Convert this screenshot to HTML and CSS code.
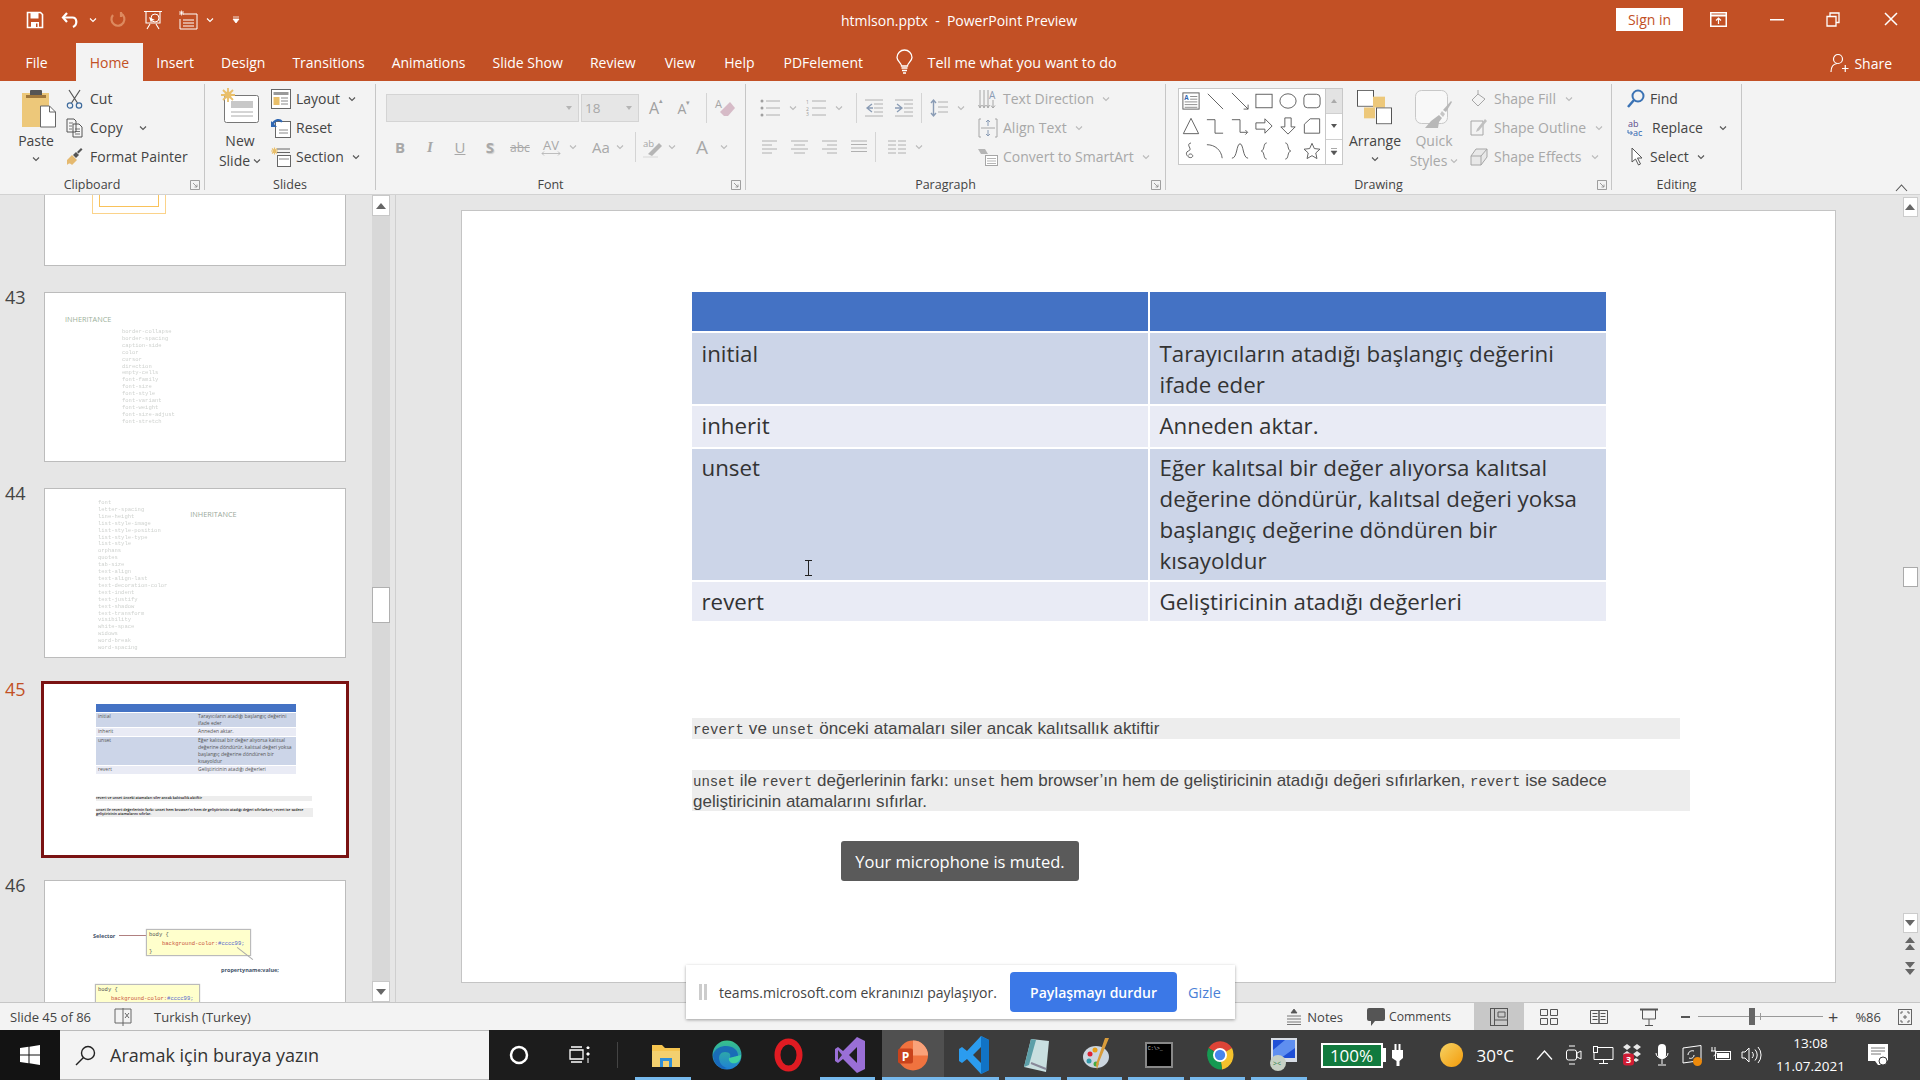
FILE: index.html
```html
<!DOCTYPE html>
<html lang="tr">
<head>
<meta charset="utf-8">
<title>htmlson.pptx - PowerPoint Preview</title>
<link rel="stylesheet" href="styles.css">
</head>
<body>
<svg class="defs" width="0" height="0">
  <symbol id="chev" viewBox="0 0 8 6"><path d="M1 1.5 4 4.5 7 1.5" fill="none" stroke="currentColor" stroke-width="1.1"/></symbol>
  <symbol id="launch" viewBox="0 0 10 10"><path d="M.5.5h9v9h-9zM3 3l4 4M7 4.5V7H4.5" fill="none" stroke="currentColor" stroke-width=".8"/></symbol>
</svg>
<div class="app">
  <header class="titlebar">
    <div class="qat">
      <svg class="q1" width="18" height="18" viewBox="0 0 18 18"><path d="M1.5 1.5h13l2 2v13h-15z" fill="none" stroke="#fff" stroke-width="1.6"/><path d="M4.5 1.5h8v6h-8zM5 11h8v5H5z" fill="#fff"/><path d="M10 12.5h1.5V16H10z" fill="#c25025"/></svg>
      <svg class="q2" width="20" height="18" viewBox="0 0 20 18"><path d="M6 2 2 6.5 6 11" fill="none" stroke="#fff" stroke-width="2.2"/><path d="M2.5 6.5h9c4.500 0 5.500 7 .5 9.500" fill="none" stroke="#fff" stroke-width="2.200"/></svg>
      <svg class="qc1" width="8" height="6"><use href="#chev"/></svg>
      <svg class="q3" width="16" height="18" viewBox="0 0 16 18"><path d="M3 4a6.500 6.500 0 1 0 8-1.500M11 1v5" fill="none" stroke="#dd8a5f" stroke-width="2.200"/></svg>
      <svg class="q4" width="20" height="20" viewBox="0 0 20 20"><path d="M1 1.500h18M3 2v11h14V2M4 19l3-5M16 19l-3-5" fill="none" stroke="#fff" stroke-width="1.100"/><circle cx="12" cy="8" r="4" fill="none" stroke="#fff"/><path d="M6 7l6 3-3 .5L8 13z" fill="#fff"/></svg>
      <svg class="q5" width="20" height="20" viewBox="0 0 20 20"><path d="M5 4h14v15H2V9M5 10h11M5 13h11M5 16h11" fill="none" stroke="#fff"/><path d="M1 3h5M3.500 .5v5M1.500 1l4 4M5.500 1l-4 4" stroke="#fff" stroke-width=".8"/></svg>
      <svg class="qc2" width="8" height="6"><use href="#chev"/></svg>
      <svg class="q6" width="8" height="8" viewBox="0 0 8 8"><path d="M1 1h6M1 3h6L4 7z" fill="#fff" stroke="#fff" stroke-width=".8"/></svg>
    </div>
    <div class="doc-title">htmlson.pptx&nbsp; - &nbsp;PowerPoint Preview</div>
    <div class="winctl">
      <button class="signin">Sign in</button>
      <svg class="w1" width="17" height="15" viewBox="0 0 17 15"><rect x=".75" y=".75" width="15.500" height="13.500" fill="none" stroke="#fff" stroke-width="1.500"/><path d="M.5 3.500h16" stroke="#fff" stroke-width="2"/><path d="M8.500 12V6M6 8.500l2.500-2.500L11 8.500" fill="none" stroke="#fff" stroke-width="1.200"/></svg>
      <svg class="w2" width="14" height="3"><rect width="14" height="1.500" y="1" fill="#fff"/></svg>
      <svg class="w3" width="14" height="15" viewBox="0 0 14 15"><path d="M1 4.500h9v9.500H1zM4 4V1h9v9.500h-3" fill="none" stroke="#fff" stroke-width="1.300"/></svg>
      <svg class="w4" width="14" height="14" viewBox="0 0 14 14"><path d="M1 1l12 12M13 1 1 13" stroke="#fff" stroke-width="1.500"/></svg>
    </div>
  </header>
  <nav class="tabs">
    <span class="tab t-file">File</span>
    <span class="tab active">Home</span>
    <span class="tab">Insert</span>
    <span class="tab">Design</span>
    <span class="tab">Transitions</span>
    <span class="tab">Animations</span>
    <span class="tab">Slide Show</span>
    <span class="tab">Review</span>
    <span class="tab t-late">View</span>
    <span class="tab t-late">Help</span>
    <span class="tab t-late">PDFelement</span>
    <svg class="bulb" width="17" height="24" viewBox="0 0 17 24"><path d="M5.500 16c0-3-4.500-5-4.500-8.500a7.500 7.500 0 0 1 15 0c0 3.500-4.500 5.500-4.500 8.500z" fill="none" stroke="#fff" stroke-width="1.300"/><path d="M5.500 18h6M6 20.500h5M7 23h3" stroke="#fff" stroke-width="1.500"/></svg>
    <span class="tellme">Tell me what you want to do</span>
    <span class="share">
      <svg width="19" height="20" viewBox="0 0 19 20"><circle cx="8" cy="6" r="4.500" fill="none" stroke="#fff" stroke-width="1.200"/><path d="M1 19c0-5 2.500-8 6-8.500M12 15.500h6.500M15.250 12v7" fill="none" stroke="#fff" stroke-width="1.200"/></svg>
      Share
    </span>
  </nav>
  <section class="ribbon">
    <div class="group g-clip">
      <div class="gbody">
        <div class="big b-paste">
          <svg class="paste-ico" width="35" height="38" viewBox="0 0 35 38"><rect x="0" y="3" width="27" height="34" fill="#edc87a"/><rect x="8" y="0" width="12" height="6" rx="1" fill="#555"/><rect x="4" y="5" width="20" height="3" fill="#a0783c"/><path d="M18.500 16h9l6 6v15h-15z" fill="#fff" stroke="#666"/><path d="M27.500 16v6h6" fill="none" stroke="#666"/></svg>
          <span class="big-label">Paste</span>
          <svg class="chv" width="8" height="6"><use href="#chev"/></svg>
        </div>
        <div class="stack">
          <div class="rbtn"><svg width="17" height="20" viewBox="0 0 17 20"><path d="M3 1l8.500 13M14 1 5.500 14" stroke="#555" stroke-width="1.200" fill="none"/><circle cx="4" cy="16.500" r="2.700" fill="none" stroke="#3d6a9c" stroke-width="1.200"/><circle cx="13" cy="16.500" r="2.700" fill="none" stroke="#3d6a9c" stroke-width="1.200"/></svg><span>Cut</span></div>
          <div class="rbtn"><svg width="17" height="20" viewBox="0 0 17 20"><path d="M1 1h7l2 2v11H1zM7 6h6l3 3v10H7z" fill="#f7f7f7" stroke="#555"/><path d="M3 5h4M3 8h3M3 11h3M9 11h5M9 13.500h5M9 16h5" stroke="#555" stroke-width=".8"/></svg><span>Copy</span><svg class="chv c-copy" width="8" height="6"><use href="#chev"/></svg></div>
          <div class="rbtn"><svg width="17" height="20" viewBox="0 0 17 20"><path d="M1 13l5-5 5 5-5 5c-2-2-3-2-5 0z" fill="#e5b96f"/><path d="M7 8l3-3 3 3-3 3z" fill="#555"/><path d="M11 5l4-4 1.500 1.500-4 4z" fill="#555"/></svg><span>Format Painter</span></div>
        </div>
      </div>
      <div class="glabel">Clipboard<svg class="launch" width="10" height="10"><use href="#launch"/></svg></div>
    </div>
    <div class="group g-slides">
      <div class="gbody">
        <div class="big b-new">
          <svg width="38" height="35" viewBox="0 0 38 35"><rect x="3.500" y="7.500" width="34" height="27" rx="2" fill="#fff" stroke="#777"/><rect x="10" y="13" width="22" height="7" fill="#c8c8c8"/><path d="M10 24h22M10 28h22" stroke="#aaa"/><path d="M7 0v14M0 7h14M2 2l10 10M12 2 2 12" stroke="#e9bf6a" stroke-width="1.800"/><circle cx="7" cy="7" r="3.500" fill="#e9bf6a"/></svg>
          <span class="big-label l-new">New</span>
          <span class="big-label">Slide <svg class="chv" width="8" height="6"><use href="#chev"/></svg></span>
        </div>
        <div class="stack">
          <div class="rbtn"><svg width="20" height="20" viewBox="0 0 20 20"><rect x=".5" y=".5" width="19" height="19" fill="#fff" stroke="#666"/><rect x="2.500" y="3" width="15" height="3" fill="#999"/><rect x="2.500" y="8" width="6" height="8" fill="#e9bf6a"/><path d="M10 9h7M10 12h7M10 15h7" stroke="#888"/></svg><span>Layout</span><svg class="chv" width="8" height="6"><use href="#chev"/></svg></div>
          <div class="rbtn"><svg width="20" height="20" viewBox="0 0 20 20"><rect x="4.500" y="3.500" width="15" height="16" fill="#fff" stroke="#666"/><path d="M8 12h9M8 15h9" stroke="#888"/><path d="M1 7c3-6 8-6 10-3" fill="none" stroke="#2f67b2" stroke-width="2.200"/><path d="M0 3v6h6z" fill="#2f67b2"/></svg><span>Reset</span></div>
          <div class="rbtn"><svg width="20" height="20" viewBox="0 0 20 20"><rect x="6.500" y="8.500" width="13" height="11" fill="#fff" stroke="#666"/><path d="M6 2h13M6 5.500h13" stroke="#666"/><path d="M8 12h10" stroke="#888"/><path d="M0 4h7M3.500 .5v7M1 1.500l5 5M6 1.500l-5 5" stroke="#e9bf6a" stroke-width="1.100"/></svg><span>Section</span><svg class="chv" width="8" height="6"><use href="#chev"/></svg></div>
        </div>
      </div>
      <div class="glabel">Slides</div>
    </div>
    <div class="group g-font dis">
      <div class="gbody col">
        <div class="frow r1">
          <div class="combo c-name"><svg width="6" height="4" viewBox="0 0 6 4"><path d="M0 0h6L3 4z" fill="#b5b5b5"/></svg></div>
          <div class="combo c-size"><span>18</span><svg width="6" height="4" viewBox="0 0 6 4"><path d="M0 0h6L3 4z" fill="#b5b5b5"/></svg></div>
          <span class="glyph w30">A<sup>▴</sup></span>
          <span class="glyph w30 sm">A<sup>▾</sup></span>
          <i class="vsep"></i>
          <svg class="clear" width="20" height="22" viewBox="0 0 20 22"><path d="M9 11 15 5l5 6-7 8H9L5 15z" fill="#c9a3b3" opacity=".7"/><text x="0" y="11" font-size="11" fill="#a6a6a6" font-family="Open Sans">A</text></svg>
        </div>
        <div class="frow r2">
          <b class="fmt">B</b><i class="fmt it">I</i><u class="fmt">U</u><b class="fmt shadow">S</b><s class="fmt sm2">abc</s>
          <span class="fmt av">AV<svg width="20" height="5" viewBox="0 0 20 5"><path d="M1 2.500h18M3 .5 1 2.500l2 2M17 .5l2 2-2 2" fill="none" stroke="#b0b0b0" stroke-width=".8"/></svg></span>
          <svg class="chv c1" width="8" height="6"><use href="#chev"/></svg>
          <span class="fmt aa">Aa</span>
          <svg class="chv c2" width="8" height="6"><use href="#chev"/></svg>
          <i class="vsep v2"></i>
          <svg class="hl" width="21" height="21" viewBox="0 0 21 21"><text x="0" y="10" font-size="9.500" fill="#a6a6a6" font-family="Open Sans">ab</text><path d="M5 17 16 6l3 3-10 10z" fill="#b5b5b5"/><path d="M0 20h15" stroke="#e5e5e5" stroke-width="2"/></svg>
          <svg class="chv c3" width="8" height="6"><use href="#chev"/></svg>
          <span class="fmt bigA">A</span>
          <svg class="chv c4" width="8" height="6"><use href="#chev"/></svg>
        </div>
      </div>
      <div class="glabel">Font<svg class="launch" width="10" height="10"><use href="#launch"/></svg></div>
    </div>
    <div class="group g-para dis">
      <div class="gbody">
        <div class="pleft">
          <div class="prow p1">
            <svg width="20" height="18" viewBox="0 0 20 18"><path d="M6 2h14M6 9h14M6 16h14" stroke="#b0b0b0"/><circle cx="2" cy="2" r="1.500" fill="#a0a0a0"/><circle cx="2" cy="9" r="1.500" fill="#a0a0a0"/><circle cx="2" cy="16" r="1.500" fill="#a0a0a0"/></svg>
            <svg class="chv pc" width="8" height="6"><use href="#chev"/></svg>
            <svg class="pn" width="20" height="18" viewBox="0 0 20 18"><path d="M6 2h14M6 9h14M6 16h14" stroke="#b0b0b0"/><text x="0" y="5" font-size="5" fill="#999">1</text><text x="0" y="11.500" font-size="5" fill="#999">2</text><text x="0" y="17" font-size="5" fill="#999">3</text></svg>
            <svg class="chv pc" width="8" height="6"><use href="#chev"/></svg>
            <i class="vsep v-out"></i>
            <svg width="18" height="18" viewBox="0 0 18 18"><path d="M0 1h18M9 5h9M9 9h9M9 13h9M0 17h18" stroke="#b0b0b0"/><path d="M7 5 2 9l5 4M2 9h6" fill="none" stroke="#8a9cb5" stroke-width="1.300"/></svg>
            <svg class="pi" width="18" height="18" viewBox="0 0 18 18"><path d="M0 1h18M9 5h9M9 9h9M9 13h9M0 17h18" stroke="#b0b0b0"/><path d="M2 5l5 4-5 4M7 9H0" fill="none" stroke="#8a9cb5" stroke-width="1.300"/></svg>
            <i class="vsep"></i>
            <svg width="18" height="20" viewBox="0 0 18 20"><path d="M8 4h10M8 9h10M8 14h10" stroke="#b0b0b0"/><path d="M3.500 2v16M1 5l2.500-3L6 5M1 15l2.500 3L6 15" fill="none" stroke="#8a9cb5" stroke-width="1.400"/></svg>
            <svg class="chv pc" width="8" height="6"><use href="#chev"/></svg>
          </div>
          <div class="prow p2">
            <svg width="15" height="14" viewBox="0 0 15 14"><path d="M0 1h15M0 5h10M0 9h15M0 13h10" stroke="#b0b0b0"/></svg>
            <svg class="ag" width="17" height="14" viewBox="0 0 17 14"><path d="M0 1h17M3 5h11M0 9h17M3 13h11" stroke="#b0b0b0"/></svg>
            <svg class="ag" width="15" height="14" viewBox="0 0 15 14"><path d="M0 1h15M5 5h10M0 9h15M5 13h10" stroke="#b0b0b0"/></svg>
            <svg class="ag" width="16" height="14" viewBox="0 0 16 14"><path d="M0 1h16M0 4.500h16M0 8h16M0 11.500h16" stroke="#b0b0b0"/></svg>
            <i class="vsep"></i>
            <svg width="18" height="14" viewBox="0 0 18 14"><path d="M0 1h8M10 1h8M0 5h8M10 5h8M0 9h8M10 9h8M0 13h8M10 13h8" stroke="#b0b0b0"/></svg>
            <svg class="chv pc" width="8" height="6"><use href="#chev"/></svg>
          </div>
        </div>
        <div class="stack s-para">
          <div class="rbtn"><svg width="20" height="20" viewBox="0 0 20 20"><path d="M2 1v17M6 1v17M10 1v17" stroke="#a6a6a6"/><path d="M.5 16 2 19l1.500-3M4.500 16 6 19l1.500-3M8.500 16l1.500 3 1.500-3" fill="none" stroke="#a6a6a6"/><text x="11" y="10" font-size="10" fill="#8a9cb5" font-family="Open Sans">A</text><path d="M15 11v8M13 16.500l2 2.500 2-2.500" fill="none" stroke="#a6a6a6"/></svg><span>Text Direction</span><svg class="chv" width="8" height="6"><use href="#chev"/></svg></div>
          <div class="rbtn"><svg width="20" height="20" viewBox="0 0 20 20"><path d="M3 1H1v18h2M17 1h2v18h-2" fill="none" stroke="#a6a6a6"/><path d="M3 10h14" stroke="#a6a6a6"/><path d="M10 2v6M8 4l2-2 2 2M10 12v6M8 16l2 2 2-2" fill="none" stroke="#8a9cb5"/></svg><span>Align Text</span><svg class="chv" width="8" height="6"><use href="#chev"/></svg></div>
          <div class="rbtn"><svg width="20" height="20" viewBox="0 0 20 20"><path d="M0 2h7l3 5H3z" fill="#b5b5b5"/><rect x="7.500" y="8.500" width="12" height="10" fill="#fff" stroke="#a6a6a6"/><path d="M9 11.500h9M9 14h9M9 16.500h9" stroke="#b5b5b5"/></svg><span>Convert to SmartArt</span><svg class="chv" width="8" height="6"><use href="#chev"/></svg></div>
        </div>
      </div>
      <div class="glabel">Paragraph<svg class="launch" width="10" height="10"><use href="#launch"/></svg></div>
    </div>
    <div class="group g-draw">
      <div class="gbody">
        <div class="gallery">
          <div class="shapes">
            <svg viewBox="0 0 20 20"><rect x="1" y="1" width="18" height="18" fill="#fff" stroke="#555"/><path d="M9 5h8M9 8h8M3 11h14M3 14h14M3 17h14" stroke="#666" stroke-width=".8"/><text x="2.500" y="9" font-size="7" font-weight="700" fill="#2f67b2" font-family="Open Sans">A</text></svg>
            <svg viewBox="0 0 20 20"><path d="M2 2l17 17" stroke="#555"/></svg>
            <svg viewBox="0 0 20 20"><path d="M1 1l18 18M19 14v5h-5" stroke="#555" fill="none"/></svg>
            <svg viewBox="0 0 20 20"><rect x="1" y="2.500" width="18" height="15" fill="none" stroke="#555"/></svg>
            <svg viewBox="0 0 20 20"><ellipse cx="10" cy="10" rx="9" ry="8" fill="none" stroke="#555"/></svg>
            <svg viewBox="0 0 20 20"><rect x="1" y="2.500" width="18" height="15" rx="4" fill="none" stroke="#555"/></svg>
            <svg viewBox="0 0 20 20"><path d="M10 1.500l8.500 17h-17z" fill="none" stroke="#555"/></svg>
            <svg viewBox="0 0 20 20"><path d="M1 3h9v15h9" fill="none" stroke="#555"/></svg>
            <svg viewBox="0 0 20 20"><path d="M1 3h9v14h8M16 14.500l2.500 2.500-2.500 2.500" fill="none" stroke="#555"/></svg>
            <svg viewBox="0 0 20 20"><path d="M1 6.500h10V2l8 8-8 8v-4.500H1z" fill="none" stroke="#555"/></svg>
            <svg viewBox="0 0 20 20"><path d="M6.500 1v10H2l8 8 8-8h-4.500V1z" fill="none" stroke="#555"/></svg>
            <svg viewBox="0 0 20 20"><path d="M1.500 18V8L8 2h10.500v16z" fill="none" stroke="#555"/></svg>
            <svg viewBox="0 0 20 20"><path d="M10 1C3 3 13 8 7 10c-5 2 0 9 4 7 3-2-2-6-4-2" fill="none" stroke="#555"/></svg>
            <svg viewBox="0 0 20 20"><path d="M1 3c9 0 16 6 17 15" fill="none" stroke="#555"/></svg>
            <svg viewBox="0 0 20 20"><path d="M1 18C7 18 6 2 10 2s3 16 9 16" fill="none" stroke="#555"/></svg>
            <svg viewBox="0 0 20 20"><path d="M13 1c-4 0-2 8-6 9 4 1 2 9 6 9" fill="none" stroke="#555"/></svg>
            <svg viewBox="0 0 20 20"><path d="M7 1c4 0 2 8 6 9-4 1-2 9-6 9" fill="none" stroke="#555"/></svg>
            <svg viewBox="0 0 20 20"><path d="M10 1.500l2.600 5.800 6.200.7-4.600 4.200 1.300 6.200-5.500-3.200-5.500 3.200 1.300-6.200L1.200 8l6.200-.7z" fill="none" stroke="#555"/></svg>
          </div>
          <div class="gscroll">
            <span class="gs-top"><svg width="6" height="4" viewBox="0 0 6 4"><path d="M0 4h6L3 0z" fill="#aaa"/></svg></span>
            <span class="gs-mid"><svg width="6" height="4" viewBox="0 0 6 4"><path d="M0 0h6L3 4z" fill="#555"/></svg></span>
            <span class="gs-bot"><svg width="6" height="7" viewBox="0 0 6 7"><path d="M0 .5h6M0 3h6L3 7z" fill="#555" stroke="#555" stroke-width=".5"/></svg></span>
          </div>
        </div>
        <div class="big b-arr">
          <svg width="36" height="35" viewBox="0 0 36 42" preserveAspectRatio="none"><rect x="0.500" y="0.500" width="16" height="19" fill="#fff" stroke="#555"/><rect x="16" y="8" width="12" height="13" fill="#edc87a"/><rect x="7" y="21" width="11" height="13" fill="#edc87a"/><rect x="19.500" y="21.500" width="15" height="19" fill="#fff" stroke="#555"/></svg>
          <span class="big-label">Arrange</span>
          <svg class="chv" width="8" height="6"><use href="#chev"/></svg>
        </div>
        <div class="big b-qs dis">
          <svg width="38" height="38" viewBox="0 0 38 38"><rect x=".5" y=".5" width="32" height="33" rx="6" fill="#f8f8f8" stroke="#c8c8c8"/><path d="M37 12 31 22l-3-2 8-9z" fill="#b8b8b8"/><path d="M27 21l3 3-2 3-3-3z" fill="#c6c6c6"/><path d="M24 25l3 3-3 4-1 6H10l6-7z" fill="#b8b8b8"/></svg>
          <span class="big-label">Quick</span>
          <span class="big-label">Styles <svg class="chv" width="8" height="6"><use href="#chev"/></svg></span>
        </div>
        <div class="stack s-shape dis">
          <div class="rbtn"><svg width="18" height="20" viewBox="0 0 18 20"><path d="M8 5 2 11l6 6 7-7zM8 5V1" fill="none" stroke="#a6a6a6"/></svg><span>Shape Fill</span><svg class="chv" width="8" height="6"><use href="#chev"/></svg></div>
          <div class="rbtn"><svg width="18" height="20" viewBox="0 0 18 20"><path d="M1 3h12v14H1z" fill="none" stroke="#a6a6a6"/><path d="M15 1 7 11l-1 3 3-1.500L17 3z" fill="#c0c0c0"/></svg><span>Shape Outline</span><svg class="chv" width="8" height="6"><use href="#chev"/></svg></div>
          <div class="rbtn"><svg width="18" height="20" viewBox="0 0 18 20"><path d="M6 2h11v8l-6 8H1V9z" fill="#e8e8e8" stroke="#a6a6a6"/><path d="M1 9h10v9M11 9l6-7" fill="none" stroke="#a6a6a6"/></svg><span>Shape Effects</span><svg class="chv" width="8" height="6"><use href="#chev"/></svg></div>
        </div>
      </div>
      <div class="glabel">Drawing<svg class="launch" width="10" height="10"><use href="#launch"/></svg></div>
    </div>
    <div class="group g-edit">
      <div class="gbody">
        <div class="stack">
          <div class="rbtn"><svg width="18" height="20" viewBox="0 0 18 20"><circle cx="11" cy="7" r="5.500" fill="none" stroke="#3a72b4" stroke-width="2"/><path d="M7 11 1 18" stroke="#3a72b4" stroke-width="2.500"/></svg><span>Find</span></div>
          <div class="rbtn"><svg width="20" height="20" viewBox="0 0 20 20"><text x="1" y="9" font-size="9" fill="#5a4a8a" font-family="Open Sans">ab</text><text x="6" y="18" font-size="9" fill="#2f67b2" font-family="Open Sans">ac</text><path d="M1 12v3h4M3.500 13 5.500 15l-2 2" fill="none" stroke="#2f67b2" stroke-width=".9"/></svg><span>Replace</span><svg class="chv c-rep" width="8" height="6"><use href="#chev"/></svg></div>
          <div class="rbtn"><svg width="18" height="20" viewBox="0 0 18 20"><path d="M5 1v14l3.500-3 3 6 2-1-3-6H15z" fill="#fff" stroke="#555"/></svg><span>Select</span><svg class="chv" width="8" height="6"><use href="#chev"/></svg></div>
        </div>
      </div>
      <div class="glabel">Editing</div>
    </div>
    <svg class="collapse" width="13" height="8" viewBox="0 0 13 8"><path d="M1 7l5.500-6L12 7" fill="none" stroke="#555" stroke-width="1.100"/></svg>
  </section>

  <main class="workspace">
    <aside class="thumbs">
      <div class="thumb-list">
        <div class="trow t-cut"><span class="tnum"></span>
          <div class="card c-partial"><div class="orange"><div class="orange-in"></div></div></div>
        </div>
        <div class="trow"><span class="tnum">43</span>
          <div class="card c43">
            <div class="inh">INHERITANCE</div>
            <div class="mini-code l43">border-collapse<br>border-spacing<br>caption-side<br>color<br>cursor<br>direction<br>empty-cells<br>font-family<br>font-size<br>font-style<br>font-variant<br>font-weight<br>font-size-adjust<br>font-stretch</div>
          </div>
        </div>
        <div class="trow"><span class="tnum">44</span>
          <div class="card c44">
            <div class="mini-code">font<br>letter-spacing<br>line-height<br>list-style-image<br>list-style-position<br>list-style-type<br>list-style<br>orphans<br>quotes<br>tab-size<br>text-align<br>text-align-last<br>text-decoration-color<br>text-indent<br>text-justify<br>text-shadow<br>text-transform<br>visibility<br>white-space<br>widows<br>word-break<br>word-spacing</div>
            <div class="inh i44">INHERITANCE</div>
          </div>
        </div>
        <div class="trow sel"><span class="tnum">45</span>
          <div class="card c45">
            <div class="mt">
              <div class="mt-h"></div><div class="mt-h"></div>
              <div class="mt-a h15">initial</div><div class="mt-a h15">Tarayıcıların atadığı başlangıç değerini<br>ifade eder</div>
              <div class="mt-b">inherit</div><div class="mt-b">Anneden aktar.</div>
              <div class="mt-a h29">unset</div><div class="mt-a h29">Eğer kalıtsal bir değer alıyorsa kalıtsal<br>değerine döndürür, kalıtsal değeri yoksa<br>başlangıç değerine döndüren bir<br>kısayoldur</div>
              <div class="mt-b">revert</div><div class="mt-b">Geliştiricinin atadığı değerleri</div>
            </div>
            <div class="mn mn1">revert ve unset önceki atamaları siler ancak kalıtsallık aktiftir</div>
            <div class="mn mn2">unset ile revert değerlerinin farkı: unset hem browser’ın hem de geliştiricinin atadığı değeri sıfırlarken, revert ise sadece geliştiricinin atamalarını sıfırlar.</div>
          </div>
        </div>
        <div class="trow"><span class="tnum">46</span>
          <div class="card c46">
            <span class="d-sel">Selector</span>
            <i class="d-line"></i>
            <div class="d-box d1">body {<br><span class="d-ind"><em>background-color:</em><b>#cccc99;</b></span><br>}</div>
            <i class="d-arrow"></i>
            <span class="d-prop">propertyname:value;</span>
            <div class="d-box d2">body {<br><span class="d-ind"><em>background-color:</em><b>#cccc99;</b></span></div>
          </div>
        </div>
      </div>
      <div class="vscroll">
        <span class="sb-btn"><svg width="10" height="6" viewBox="0 0 10 6"><path d="M0 6h10L5 0z" fill="#666"/></svg></span>
        <span class="sb-thumb"></span>
        <span class="sb-btn sb-end"><svg width="10" height="6" viewBox="0 0 10 6"><path d="M0 0h10L5 6z" fill="#666"/></svg></span>
      </div>
    </aside>
    <div class="stage">
      <div class="slide">
        <div class="table">
          <div class="th"></div><div class="th"></div>
          <div class="td a r-init">initial</div><div class="td a r-init">Tarayıcıların atadığı başlangıç değerini ifade eder</div>
          <div class="td b r-inh">inherit</div><div class="td b r-inh">Anneden aktar.</div>
          <div class="td a r-un">unset</div><div class="td a r-un">Eğer kalıtsal bir değer alıyorsa kalıtsal değerine döndürür, kalıtsal değeri yoksa başlangıç değerine döndüren bir kısayoldur</div>
          <div class="td b r-rev">revert</div><div class="td b r-rev">Geliştiricinin atadığı değerleri</div>
        </div>
        <p class="note n1"><code>revert</code> <span>ve</span> <code>unset</code> <span>önceki atamaları siler ancak kalıtsallık aktiftir</span></p>
        <p class="note n2"><code>unset</code> <span>ile</span> <code>revert</code> <span>değerlerinin farkı:</span> <code>unset</code> <span>hem browser’ın hem de geliştiricinin atadığı değeri sıfırlarken,</span> <code>revert</code> <span>ise sadece geliştiricinin atamalarını sıfırlar.</span></p>
      </div>
      <div class="rscroll">
        <span class="rs-btn"><svg width="10" height="6" viewBox="0 0 10 6"><path d="M0 6h10L5 0z" fill="#666"/></svg></span>
        <span class="rs-thumb"></span>
        <span class="rs-btn rs-end"><svg width="10" height="6" viewBox="0 0 10 6"><path d="M0 0h10L5 6z" fill="#666"/></svg></span>
        <span class="rs-dbl d-a"><svg width="10" height="13" viewBox="0 0 10 13"><path d="M0 6h10L5 0zM0 13h10L5 7z" fill="#666"/></svg></span>
        <span class="rs-dbl"><svg width="10" height="13" viewBox="0 0 10 13"><path d="M0 0h10L5 6zM0 7h10L5 13z" fill="#666"/></svg></span>
      </div>
    </div>
  </main>

  <footer class="statusbar">
    <span class="st-slide">Slide 45 of 86</span>
    <svg class="st-spell" width="18" height="18" viewBox="0 0 18 18"><path d="M9 1H1v14h8M9 1h8v14H9M9 0v18" fill="none" stroke="#666"/><path d="M11 5l4 5M15 5l-4 5" stroke="#666"/></svg>
    <span class="st-lang">Turkish (Turkey)</span>
    <span class="st-fill"></span>
    <svg class="st-ni" width="14" height="16" viewBox="0 0 14 16"><path d="M7 0l3 4H4zM0 7h14M0 10h14M0 13h14M0 15.500h14" fill="#555" stroke="#555" stroke-width=".8"/></svg>
    <span class="st-notes">Notes</span>
    <svg class="st-ci" width="18" height="18" viewBox="0 0 18 18"><path d="M2 0h14a2 2 0 0 1 2 2v9a2 2 0 0 1-2 2H8l-4 5v-5H2a2 2 0 0 1-2-2V2a2 2 0 0 1 2-2z" fill="#555"/></svg>
    <span class="st-comments">Comments</span>
    <span class="vbtn on"><svg width="18" height="18" viewBox="0 0 18 18"><rect x=".5" y=".5" width="17" height="17" fill="none" stroke="#555"/><path d="M4.500 1v16M4.500 12h13M8 4h7v5H8z" fill="none" stroke="#555"/></svg></span>
    <span class="vbtn"><svg width="18" height="16" viewBox="0 0 18 16"><path d="M.5.5h7v6h-7zM10.500.5h7v6h-7zM.5 9.500h7v6h-7zM10.500 9.500h7v6h-7z" fill="none" stroke="#555"/></svg></span>
    <span class="vbtn"><svg width="18" height="16" viewBox="0 0 18 16"><path d="M.5 1.500h8.500v13H.5zM9 1.500h8.500v13H9zM2.500 4.500h5M2.500 7.500h5M2.500 10.500h5M10.500 4.500h5M10.500 7.500h5M10.500 10.500h5" fill="none" stroke="#555"/></svg></span>
    <span class="vbtn"><svg width="18" height="18" viewBox="0 0 18 18"><path d="M0 1.500h18" stroke="#555" stroke-width="2"/><path d="M2.500 2v9h13V2M9 11v6M5 17.500h8" fill="none" stroke="#555"/></svg></span>
    <span class="zminus"></span>
    <div class="zoomtrack"><i class="ztick"></i><i class="zthumb"></i></div>
    <span class="zplus">+</span>
    <span class="zpct">%86</span>
    <svg class="zfit" width="14" height="16" viewBox="0 0 14 16"><rect x=".5" y=".5" width="13" height="15" fill="none" stroke="#666"/><path d="M3 3h2M3 3v2M11 3H9M11 3v2M3 13h2M3 13v-2M11 13H9M11 13v-2M7 6v4M5 8h4" stroke="#666" fill="none"/></svg>
  </footer>

  <div class="taskbar">
    <div class="tb-start"><svg width="20" height="20" viewBox="0 0 20 20"><path d="M0 3l8.500-1.200V9.500H0zM9.500 1.700 20 0v9.500H9.500zM0 10.500h8.500v7.700L0 17zM9.500 10.500H20V20L9.500 18.300z" fill="#fff"/></svg></div>
    <div class="tb-search">
      <svg width="21" height="21" viewBox="0 0 21 21"><circle cx="13" cy="8" r="6.500" fill="none" stroke="#222" stroke-width="1.400"/><path d="M8.500 12.500 1 20" stroke="#222" stroke-width="1.400"/></svg>
      <span>Aramak için buraya yazın</span>
    </div>
    <div class="tb-dark">
      <span class="tcell sys"><svg width="20" height="20" viewBox="0 0 20 20"><circle cx="10" cy="10" r="8" fill="none" stroke="#fff" stroke-width="2.500"/></svg></span>
      <span class="tcell sys"><svg width="21" height="18" viewBox="0 0 21 18"><path d="M1 4h13v9H1zM2 1h11M2 16h11" fill="none" stroke="#fff" stroke-width="1.300"/><path d="M18 1h2v1.500h-2zM18 7h2v2h-2zM19 12v5" stroke="#fff" fill="#fff"/></svg></span>
      <i class="tb-sep"></i>
      <span class="app-cell run"><svg width="28" height="24" viewBox="0 0 28 24"><path d="M0 2h10l3 3h15v19H0z" fill="#f5c44f"/><path d="M0 8h28v16H0z" fill="#f3d06f"/><path d="M8 15h12v9H8z" fill="#2f8fd8"/><path d="M11 18h6v6h-6z" fill="#f3d06f"/></svg></span>
      <span class="app-cell"><svg width="30" height="30" viewBox="0 0 30 30"><defs><linearGradient id="eg1" x1="0" y1="0" x2="0" y2="1"><stop offset="0" stop-color="#37c28b"/><stop offset="1" stop-color="#1f7fd6"/></linearGradient></defs><circle cx="15" cy="15" r="14.500" fill="url(#eg1)"/><path d="M11 29C5 27 1 21 1 15 3 8 9 6 14 6c7 0 12 4 12 9 0 3-3 4-5 4-3 0-3-1-3-2 1-2 0-5-5-5-4 0-6 3-6 6 0 4 3 9 8 10z" fill="#1663b8" opacity=".85"/><path d="M17 18c-1 4 3 6 7 5 3-1 5-4 5-8" fill="#3ed0a0"/></svg></span>
      <span class="app-cell"><svg width="29" height="32" viewBox="0 0 29 32"><ellipse cx="14.500" cy="16" rx="11" ry="13.500" fill="none" stroke="#e01b22" stroke-width="6"/></svg></span>
      <span class="app-cell run"><svg width="30" height="38" viewBox="0 0 30 38"><path d="M22 1 30 5v28l-8 4L8 23l-5 4-3-2V13l3-2 5 4zM22 11l-8 8 8 8z" fill="#9a6fd6" fill-rule="evenodd"/><path d="M3 14v10l4-5z" fill="#2a2a2a"/></svg></span>
    </div>
    <div class="tb-rest">
      <span class="app-cell run act"><svg width="31" height="31" viewBox="0 0 31 31"><circle cx="16" cy="15.500" r="15" fill="#f0733f"/><path d="M16 .5a15 15 0 0 1 15 15H16z" fill="#f9a27a"/><rect x="1" y="8.500" width="15" height="15" rx="2" fill="#c9431c"/><text x="8.500" y="20.500" font-size="12" font-weight="700" text-anchor="middle" fill="#fff" font-family="Open Sans">P</text></svg></span>
      <span class="app-cell run"><svg width="30" height="38" viewBox="0 0 30 38"><path d="M22 0 30 4v30l-8 4-14-15-5 4-3-2V13l3-2 5 4z" fill="#2b9cef"/><path d="M22 11l-8 8 8 8z" fill="#3c3c3c"/><path d="M22 0 30 4v30l-8 4z" fill="#1173c6"/></svg></span>
      <span class="app-cell run"><svg width="26" height="36" viewBox="0 0 26 36"><path d="M8 2 26 4l-3 31L1 30z" fill="#c9dfe0"/><path d="M8 2 1 30l5-2 7-25z" fill="#5c9fa8"/><path d="M8 26l15 6" stroke="#889" stroke-width="2"/></svg></span>
      <span class="app-cell run"><svg width="28" height="36" viewBox="0 0 28 36"><ellipse cx="13" cy="20" rx="13" ry="11" fill="#ccd6df"/><circle cx="7" cy="17" r="2.500" fill="#d23"/><circle cx="12" cy="13" r="2.500" fill="#e8a01a"/><circle cx="6" cy="24" r="2.500" fill="#39a"/><circle cx="13" cy="27" r="2.500" fill="#4a4"/><path d="M26 1 16 25l-2 8-1-6 9-26z" fill="#d99c3b"/></svg></span>
      <span class="app-cell run"><span class="cmd">C:\&gt;_</span></span>
      <span class="app-cell run"><svg width="28" height="30" viewBox="0 0 28 30"><path d="M14 15 2.500 8A14 15 0 0 1 26 8z" fill="#dd4437"/><path d="M14 15 26 8a14 15 0 0 1-10 21.500z" fill="#f5c22c"/><path d="M14 15l2 14.500A14 15 0 0 1 2.500 8z" fill="#159a52"/><circle cx="14" cy="15" r="7" fill="#fff"/><circle cx="14" cy="15" r="5.200" fill="#4785ee"/></svg></span>
      <span class="app-cell run c-rdp"><svg width="30" height="34" viewBox="0 0 30 34"><rect x="4" y="0" width="26" height="24" fill="#d8dde5"/><rect x="6" y="2" width="22" height="18" fill="#1f4fd6"/><path d="M6 12 18 2h10v8L14 20H6z" fill="#5f8ff0"/><circle cx="11" cy="25" r="8" fill="#c7d0c4"/><text x="6" y="28" font-size="7" fill="#2a7f3f" font-family="Open Sans">&gt;&lt;</text></svg></span>
      <span class="battery"><span class="batt-fill">100%</span></span><i class="batt-nub"></i>
      <svg class="plug" width="11" height="22" viewBox="0 0 11 22"><path d="M2.500 0h2v6h2V0h2v6H11v8l-3.500 3v5h-3v-5L0 14V6h2.500z" fill="#fff"/></svg>
      <span class="sun"></span>
      <span class="temp">30°C</span>
      <span class="tray"><svg width="17" height="10" viewBox="0 0 17 10"><path d="M1 9.500 8.500 1 16 9.500" fill="none" stroke="#fff" stroke-width="1.300"/></svg></span>
      <span class="tray"><svg width="15" height="20" viewBox="0 0 15 20"><path d="M3 1h6M3 19h6" stroke="#fff"/><rect x=".5" y="5" width="10" height="10" rx="2" fill="none" stroke="#fff"/><path d="M11 8l4-2v8l-4-2z" fill="none" stroke="#fff"/></svg></span>
      <span class="tray"><svg width="20" height="18" viewBox="0 0 20 18"><path d="M4 1.500h16v12H1v-7M10.500 13.500V17M6 17.500h9" fill="none" stroke="#fff"/><rect x=".5" y=".5" width="4" height="6" fill="#3c3c3c" stroke="#fff"/></svg></span>
      <span class="tray"><svg width="20" height="22" viewBox="0 0 20 22"><path d="M4 0l4 3-4 3-4-3zM14 0l4 3-4 3-4-3zM4 7l4 3-4 3-4-3zM14 7l4 3-4 3-4-3zM13 14l3 2-3 2-3-2z" fill="#e8e8e8"/><rect x="0" y="9.500" width="11" height="12" rx="3" fill="#d01c34"/><text x="5.500" y="19" font-size="9" font-weight="700" text-anchor="middle" fill="#fff" font-family="Open Sans">3</text></svg></span>
      <span class="tray"><svg width="14" height="22" viewBox="0 0 14 22"><rect x="3" y="0" width="8" height="15" rx="4" fill="#fff"/><path d="M1 9c0 7 12 7 12 0M7 15v5M3 21h8" fill="none" stroke="#fff"/></svg></span>
      <span class="tray"><svg width="20" height="21" viewBox="0 0 20 21"><path d="M1 3 19 .5v15L1 18z" fill="none" stroke="#fff"/><path d="M6 10c0-3 3-5 6-4M12 10c0 3-3 4-5 3" fill="none" stroke="#fff"/><circle cx="15.500" cy="16.500" r="4.500" fill="#ed8a0c"/></svg></span>
      <span class="tray"><svg width="20" height="16" viewBox="0 0 20 16"><path d="M4 0v4M1 0v4M0 4h5v3L2.500 9" stroke="#fff" fill="none"/><rect x="4.500" y="4.500" width="15" height="8" fill="none" stroke="#fff"/><rect x="6" y="6" width="12" height="5" fill="#fff"/></svg></span>
      <span class="tray"><svg width="20" height="18" viewBox="0 0 20 18"><path d="M1 6h3l4-4v14l-4-4H1z" fill="none" stroke="#fff"/><path d="M11 6a4 4 0 0 1 0 6M14 3.500a8 8 0 0 1 0 11M17 1a12 12 0 0 1 0 16" fill="none" stroke="#fff"/></svg></span>
      <div class="clock"><span>13:08</span><span>11.07.2021</span></div>
      <span class="notif"><svg width="20" height="22" viewBox="0 0 20 22"><path d="M0 0h20v16l-5 5H10L7 17H0z" fill="#fff"/><path d="M3 4h14M3 7h14M3 10h10" stroke="#777"/><circle cx="15" cy="17" r="4" fill="#fff" stroke="#3c3c3c"/></svg></span>
    </div>
  </div>

  <div class="mic-tip">Your microphone is muted.</div>
  <svg class="ibeam" width="9" height="16" viewBox="0 0 9 16"><path d="M1 .5h7M1 15.500h7M4.500 1v14" stroke="#222" fill="none"/></svg>
  <div class="sharebar">
    <i class="grip"></i>
    <span class="share-text">teams.microsoft.com ekranınızı paylaşıyor.</span>
    <button class="stop">Paylaşmayı durdur</button>
    <span class="hide">Gizle</span>
  </div>
</div>
</body>
</html>
```

FILE: styles.css
```css
* { box-sizing: border-box; }
html, body { margin: 0; padding: 0; }
body { width: 1920px; height: 1080px; overflow: hidden; background: #e6e6e6; font-family: "Open Sans", "Noto Sans", sans-serif; color: #333; }
.defs { position: absolute; }
svg { display: block; flex: none; overflow: visible; }
.app { position: relative; width: 1920px; height: 1080px; display: flex; flex-direction: column; overflow: hidden; }

/* title bar */
.titlebar { height: 43px; background: #c25025; color: #fff; display: flex; align-items: center; position: relative; }
.qat { display: flex; align-items: center; padding-left: 26px; color: #fff; margin-top: -3px; }
.q2 { margin-left: 17px; } .qc1 { margin-left: 8px; } .q3 { margin-left: 13px; } .q4 { margin-left: 17px; } .q5 { margin-left: 15px; } .qc2 { margin-left: 8px; } .q6 { margin-left: 18px; }
.doc-title { position: absolute; left: 841px; top: 11px; font-size: 14px; line-height: 19px; white-space: nowrap; }
.winctl { margin-left: auto; display: flex; align-items: center; margin-top: -5px; }
.signin { width: 67px; height: 23px; background: #fff; color: #c25025; border: 0; font: 14px/23px "Open Sans", sans-serif; padding: 0; }
.w1 { margin-left: 27px; } .w2 { margin-left: 43px; } .w3 { margin-left: 42px; } .w4 { margin-left: 44px; margin-right: 22px; }

/* tabs */
.tabs { height: 38px; background: #c25025; display: flex; align-items: stretch; color: #fff; font-size: 14px; padding-left: 12px; }
.tab { display: flex; align-items: center; padding: 0 13.5px; white-space: nowrap; }
.t-file { margin-right: 15px; }
.t-late { margin-left: 2px; }
.tab.active { background: #f3f3f3; color: #c25025; padding: 0 13.5px; margin: 0; }
.bulb { align-self: center; margin-left: 19px; }
.tellme { align-self: center; margin-left: 15px; white-space: nowrap; font-size: 14.400px; }
.share { margin-left: auto; margin-right: 28px; display: flex; align-items: center; gap: 5px; padding-top: 2px; }

/* ribbon */
.ribbon { height: 114px; background: #f3f3f3; display: flex; position: relative; border-bottom: 1px solid #d2d2d2; font-size: 14px; color: #444; }
.group { display: flex; flex-direction: column; height: 106px; border-right: 1px solid #c6c6c6; margin-top: 3px; position: relative; }
.gbody { height: 89px; flex: none; display: flex; }
.gbody.col { flex-direction: column; }
.glabel { height: 17px; font-size: 12.500px; line-height: 24px; text-align: center; color: #444; position: relative; }
.g-clip .glabel, .g-font .glabel, .g-para .glabel, .g-draw .glabel { padding-right: 20px; }
.launch { position: absolute; right: 4px; top: 7px; color: #888; }
.g-clip { width: 205px; } .g-slides { width: 171px; } .g-font { width: 370px; } .g-para { width: 420px; } .g-draw { width: 446px; } .g-edit { width: 130px; }
.big { display: flex; flex-direction: column; align-items: center; }
.big-label { display: flex; align-items: center; gap: 3px; line-height: 20px; white-space: nowrap; }
.chv { width: 8px; height: 6px; color: #555; }
.b-paste { width: 66px; padding: 6px 0 0 6px; }
.paste-ico { margin-left: 6px; }
.b-paste .big-label { margin-top: 3px; }
.b-paste .chv { margin-top: 5px; }
.stack { display: flex; flex-direction: column; }
.rbtn { height: 29.200px; display: flex; align-items: center; gap: 5px; white-space: nowrap; }
.rbtn .chv { margin-left: 3px; }
.c-copy { margin-left: 11px !important; }
.g-clip .rbtn svg:first-child { margin-right: 2px; }
.b-new { width: 66px; padding: 4px 0 0 4px; }
.l-new { margin-top: 8px; }

.dis, .dis .rbtn, .dis .big-label { color: #a8a8a8; }
.dis .chv { color: #bbb; }
.g-font .glabel, .g-para .glabel { color: #444; }
.frow { display: flex; align-items: center; }
.r1 { height: 28px; margin-top: 10px; padding-left: 10px; }
.combo { height: 28px; background: #e6e6e6; border: 1px solid #d4d4d4; display: flex; align-items: center; justify-content: flex-end; padding-right: 6px; font-size: 13.500px; }
.c-name { width: 193px; }
.c-size { width: 58px; margin-left: 2px; justify-content: space-between; padding-left: 3px; }
.glyph { font-size: 16px; display: flex; width: 28px; justify-content: center; color: #a0a0a0; }
.glyph sup { font-size: 7px; line-height: 8px; }
.glyph.sm { font-size: 14px; }
.glyph:nth-child(3) { margin-left: 3px; }
.vsep { display: block; width: 1px; height: 30px; background: #d4d4d4; margin: 0 8px; flex: none; }
.r2 { height: 30px; margin-top: 10px; padding-left: 9px; }
.fmt { font-style: normal; font-size: 15px; width: 30px; color: #a8a8a8; text-align: center; display: flex; flex-direction: column; align-items: center; line-height: 15px; }
u.fmt, s.fmt, b.fmt { display: block; }
.it { font-family: "Liberation Serif", serif; font-style: italic; font-weight: 700; display: block; }
.shadow { text-shadow: 1px 1px 1px #ccc; }
.sm2 { font-size: 12px; }
.av { font-size: 13px; line-height: 12px; width: 24px; margin-left: 4px; }
.c1 { margin-left: 6px; }
.aa { margin-left: 12px; width: 24px; }
.c2 { margin-left: 3px; }
.v2 { margin: 0 7px 0 11px; }
.c3 { margin-left: 4px; }
.bigA { font-size: 19px; margin-left: 11px; }
.c4 { margin-left: 3px; }

.pleft { width: 226px; padding-left: 14px; }
.prow { display: flex; align-items: center; }
.p1 { height: 28px; margin-top: 10px; }
.p2 { height: 30px; margin-top: 10px; padding-left: 2px; }
.p2 .vsep { margin: 0 12px 0 8px; }
.pc { margin-left: 9px; }
.pn { margin-left: 9px; }
.pi { margin-left: 12px; }
.ag { margin-left: 14px; }
.v-out { margin-left: 13px; }
.s-para { padding-left: 6px; }

/* drawing */
.g-draw .gbody { padding-left: 12px; }
.gallery { width: 165px; height: 77px; margin-top: 4px; background: #fff; border: 1px solid #c8c8c8; display: flex; }
.shapes { width: 146px; display: grid; grid-template-columns: repeat(6, 24.300px); grid-template-rows: repeat(3, 25px); }
.shapes svg { width: 18px; height: 18px; margin: 3px; }
.gscroll { flex: 1; display: flex; flex-direction: column; border-left: 1px solid #c8c8c8; }
.gscroll span { flex: 1; display: flex; align-items: center; justify-content: center; }
.gs-top { background: #e3e3e3; }
.gs-mid { border-top: 1px solid #d0d0d0; border-bottom: 1px solid #d0d0d0; }
.b-arr { width: 66px; margin-left: -1px; padding-top: 6px; }
.b-arr .big-label { margin-top: 6px; }
.b-arr .chv { margin-top: 5px; }
.b-qs { width: 54px; padding-top: 6px; margin-left: -1px; }
.b-qs .big-label:nth-of-type(1) { margin-top: 3px; }
.s-shape { padding-left: 9px; }
.s-shape .rbtn { gap: 6px; }
.g-edit .gbody { padding-left: 15px; }
.g-edit .rbtn { gap: 5px; }
.c-rep { margin-left: 11px !important; }
.collapse { position: absolute; right: 12px; top: 103px; }

/* workspace */
.workspace { height: 808px; display: flex; background: #e6e6e6; border-bottom: 1px solid #c6c6c6; overflow: hidden; }
.thumbs { width: 396px; display: flex; border-right: 1px solid #cfcfcf; }
.thumb-list { width: 372px; display: flex; flex-direction: column; gap: 26px; overflow: hidden; }
.trow { display: flex; flex: none; }
.tnum { width: 44px; padding-left: 5px; font-size: 18px; line-height: 10px; color: #444; }
.sel .tnum { color: #c25025; }
.card { width: 302px; height: 170px; background: #fff; border: 1px solid #bcbcbc; position: relative; overflow: hidden; }
.sel { margin-bottom: -1px; }
.sel .card { height: 171px; outline: 3px solid #7a1212; border-color: #fff; }
.c-partial { height: 71px; border-top: 0; }
.orange { width: 74px; height: 19px; margin-left: 47px; border: 1px solid #fbd38a; border-top: 0; padding: 0 6px 6px; }
.orange-in { height: 100%; border: 1px solid #f9c25a; border-top: 0; }
.inh { font-size: 7.300px; line-height: 10px; color: #9cb09a; white-space: nowrap; }
.mini-code { font-family: "Liberation Mono", monospace; font-size: 5.500px; line-height: 6.900px; color: #cfd2cf; filter: blur(.3px); }
.c43 { padding: 21px 0 0 20px; }
.l43 { margin: 5px 0 0 57px; }
.c44 { padding: 11px 0 0 53px; display: flex; }
.i44 { margin: 9px 0 0 23px; color: #9aa89a; }
.c45 { padding: 19px 0 0 51px; }
.mt { width: 200px; display: grid; grid-template-columns: 100px 100px; font-size: 5px; line-height: 7px; color: #555; column-gap: 0; }
.mt > div { padding: 0 2px; white-space: nowrap; border-bottom: .5px solid #fff; }
.mt-h { background: #4472c4; height: 9px; }
.mt-a { background: #ccd5e8; }
.mt-b { background: #e9ebf5; min-height: 9px; }
.h15 { height: 15px; } .h29 { height: 29px; }
.mn { font-size: 3.600px; line-height: 4px; color: #111; font-weight: 600; background: #ededed; }
.mn1 { margin-top: 21px; width: 216px; height: 5px; }
.mn2 { margin-top: 7px; width: 217px; height: 9px; }
.c46 { height: 190px; }
.d-sel { position: absolute; left: 48px; top: 51px; font-size: 5.500px; font-weight: 700; color: #44546a; line-height: 8px; }
.d-line { position: absolute; left: 74px; top: 54px; width: 27px; height: 1px; background: #b08080; }
.d-box { position: absolute; width: 105px; background: #ffffcc; border: 1px solid #bbb; font-family: "Liberation Mono", monospace; font-size: 5.500px; line-height: 8.500px; color: #555; padding: 1px 2px; box-shadow: 0 0 1px #bbb; }
.d1 { left: 101px; top: 48px; height: 27px; }
.d2 { left: 50px; top: 103px; height: 40px; }
.d-ind { padding-left: 13px; }
.d-ind em { color: #c8553d; font-style: normal; }
.d-ind b { color: #5566cc; font-weight: 400; }
.d-arrow { position: absolute; left: 190px; top: 72px; width: 20px; height: 1px; background: #aaa; transform: rotate(38deg); }
.d-prop { position: absolute; left: 176px; top: 85px; font-size: 5.500px; font-weight: 700; line-height: 8px; color: #44546a; white-space: nowrap; }
.vscroll { width: 18px; display: flex; flex-direction: column; background: #d8d8d8; }
.sb-btn { height: 21px; background: #fff; border: 1px solid #c8c8c8; display: flex; align-items: center; justify-content: center; }
.sb-thumb { height: 36px; margin-top: 371px; background: #fff; border: 1px solid #b0b0b0; }
.sb-end { margin-top: auto; margin-bottom: 0; }

.stage { flex: 1; display: flex; padding-top: 15px; }
.slide { width: 1375px; height: 773px; margin-left: 65px; background: #fff; border: 1px solid #c4c4c4; padding: 81px 0 0 230px; }
.table { width: 914px; display: grid; grid-template-columns: 458px 456px; font-size: 22.300px; line-height: 31px; color: #333; }
.th { height: 39px; background: #4472c4; border-right: 2px solid #fff; }
.th:nth-child(2) { border-right: 0; }
.td { padding: 5px 10px 0 9.500px; border-top: 2px solid #fff; }
.td:nth-child(odd) { border-right: 2px solid #fff; }
.a { background: #ccd5e8; } .b { background: #e9ebf5; }
.r-init { height: 73px; } .r-inh { height: 43px; padding-top: 4px; } .r-un { height: 133px; padding-top: 3px; } .r-rev { height: 41px; padding-top: 4px; }
.note { margin: 0; font-family: "Liberation Sans", sans-serif; font-size: 17px; line-height: 21px; color: #444; background: #ededed; }
.note code { font-family: "Liberation Mono", monospace; font-size: 14px; line-height: 0; }
.n1 { margin-top: 97px; width: 988px; height: 21px; padding-left: 1px; letter-spacing: .1px; }
.n2 { margin-top: 31px; width: 998px; height: 41px; padding-left: 1px; padding-right: 60px; letter-spacing: .02px; }
.rscroll { width: 16px; margin-left: auto; margin-right: 2px; display: flex; flex-direction: column; align-items: center; margin-top: -15px; gap: 0; }
.rs-btn { width: 15px; height: 20px; background: #fff; border: 1px solid #ccc; display: flex; align-items: center; justify-content: center; margin-top: 2px; }
.rs-thumb { width: 15px; height: 20px; background: #fff; border: 1px solid #aaa; margin-top: 350px; }
.rs-end { margin-top: 326px; }
.rs-dbl { height: 20px; display: flex; align-items: center; margin-top: 5px; }
.d-a { margin-top: 0; }

/* status */
.statusbar { height: 27px; background: #f3f3f3; display: flex; align-items: center; font-size: 13px; color: #444; white-space: nowrap; }
.st-slide { margin-left: 10px; }
.st-spell { margin-left: 23px; }
.st-lang { margin-left: 22px; }
.st-fill { flex: 1; }
.st-notes { margin-left: 6px; }
.st-ci { margin-left: 24px; }
.st-comments { margin-left: 4px; margin-right: 23px; font-size: 12.200px; }
.vbtn { width: 50px; height: 27px; display: flex; align-items: center; justify-content: center; }
.vbtn.on { background: #c8c8c8; }
.zminus { width: 9px; height: 2px; background: #555; margin: 0 8px 0 7px; }
.zoomtrack { width: 125px; height: 1px; background: #999; position: relative; }
.ztick { position: absolute; left: 62px; top: -3px; width: 1px; height: 7px; background: #999; }
.zthumb { position: absolute; left: 51px; top: -8px; width: 6px; height: 17px; background: #666; }
.zplus { font-size: 18px; line-height: 18px; margin-left: 5px; }
.zpct { margin-left: 17px; }
.zfit { margin-left: 17px; margin-right: 8px; }

/* taskbar */
.taskbar { height: 50px; display: flex; }
.tb-start { width: 60px; background: #131313; display: flex; align-items: center; justify-content: center; }
.tb-search { width: 429px; background: #f3f3f3; border-top: 1px solid #bbb; border-bottom: 1px solid #bbb; display: flex; align-items: center; padding-left: 15px; font-size: 18px; color: #333; gap: 14px; }
.tb-dark { width: 393px; background: #1c1c1c; display: flex; align-items: center; }
.tb-rest { flex: 1; background: #3c3c3c; display: flex; align-items: center; color: #fff; }
.tcell { display: flex; align-items: center; justify-content: center; }
.sys { width: 60px; height: 50px; }
.tb-sep { width: 1px; height: 26px; background: #444; margin: 0 17px 0 8px; }
.app-cell { width: 61.500px; height: 50px; display: flex; align-items: center; justify-content: center; position: relative; }
.app-cell.run::after { content: ""; position: absolute; left: 0; right: 6px; bottom: 0; height: 3px; background: #76b9ed; }
.app-cell.act { background: #505050; }
.app-cell.act::after { right: 0; }
.cmd { width: 28px; height: 26px; background: #000; border: 2px solid #888; color: #ccc; font: 5px/8px "Liberation Mono", monospace; padding: 1px; overflow: hidden; }
.battery { width: 62px; height: 25px; margin-left: 8px; border: 2px solid #fff; background: #fff; display: flex; }
.batt-fill { flex: 1; background: #117a3e; color: #fff; font-size: 17px; line-height: 21px; text-align: center; }
.batt-nub { width: 3px; height: 14px; background: #fff; }
.plug { margin-left: 6px; }
.sun { width: 23px; height: 24px; border-radius: 50%; background: linear-gradient(135deg, #f6d365, #f49b0a); margin-left: 37px; }
.temp { font-size: 17px; margin-left: 14px; width: 38px; white-space: nowrap; }
.tray { width: 29.500px; display: flex; justify-content: center; }
.temp + .tray { margin-left: 15px; }
.clock { width: 92px; margin-left: -1px; display: flex; flex-direction: column; align-items: center; font-size: 13.500px; line-height: 23px; }
.notif { margin-left: 11px; }

/* overlays */
.mic-tip { position: absolute; left: 841px; top: 841px; width: 238px; height: 40px; background: #5a5a5a; color: #fff; border-radius: 3px; font-size: 16.500px; line-height: 41px; text-align: center; }
.ibeam { position: absolute; left: 804px; top: 560px; }
.sharebar { position: absolute; left: 686px; top: 965px; width: 549px; height: 54px; background: #fff; box-shadow: 0 1px 3px rgba(0,0,0,.35); display: flex; align-items: center; padding-left: 13px; }
.grip { width: 8px; height: 16px; border-left: 3px solid #ccc; border-right: 3px solid #ccc; }
.share-text { margin-left: 12px; font-size: 14px; color: #444; white-space: nowrap; width: 291px; }
.stop { width: 167px; height: 40px; background: #3b78e7; color: #fff; border: 0; border-radius: 4px; font: 600 14px "Open Sans", sans-serif; padding: 0; }
.hide { margin-left: 11px; color: #4a7fd6; font-size: 14.500px; }
```
